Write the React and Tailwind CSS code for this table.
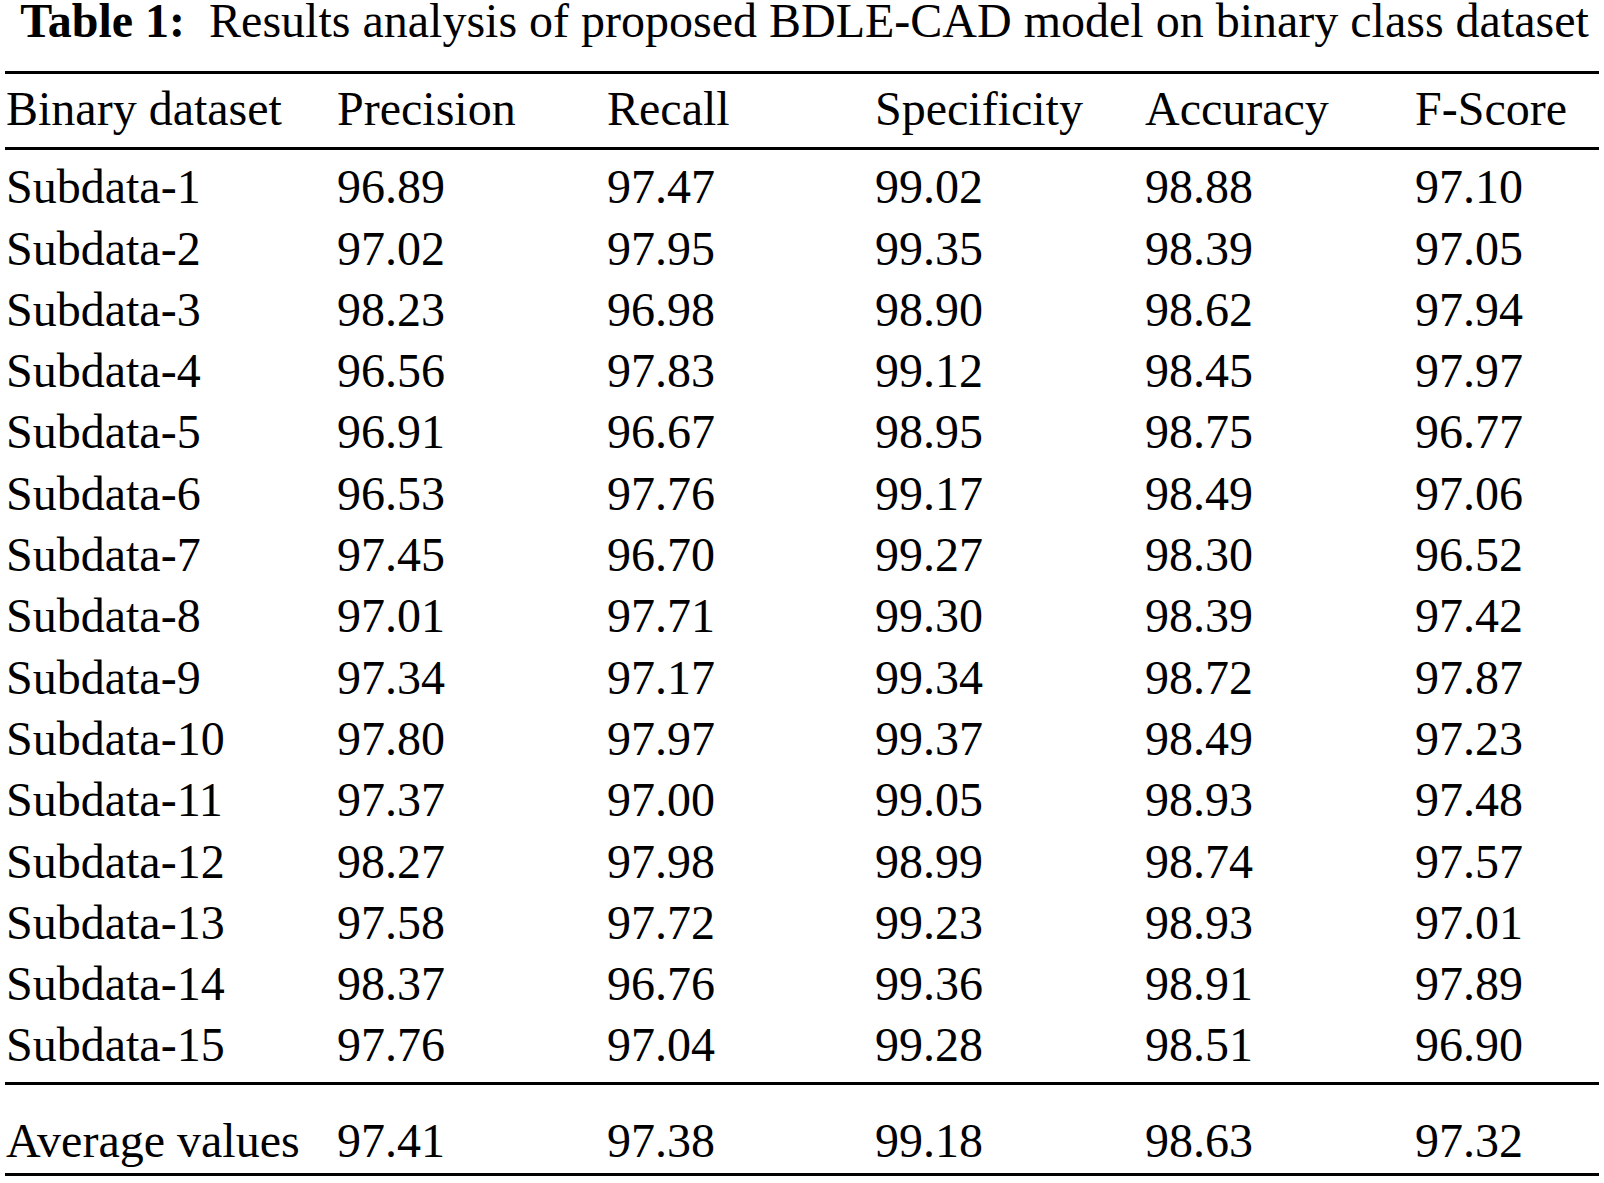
import React from 'react';

const rows = [
  ['Subdata-1', '96.89', '97.47', '99.02', '98.88', '97.10'],
  ['Subdata-2', '97.02', '97.95', '99.35', '98.39', '97.05'],
  ['Subdata-3', '98.23', '96.98', '98.90', '98.62', '97.94'],
  ['Subdata-4', '96.56', '97.83', '99.12', '98.45', '97.97'],
  ['Subdata-5', '96.91', '96.67', '98.95', '98.75', '96.77'],
  ['Subdata-6', '96.53', '97.76', '99.17', '98.49', '97.06'],
  ['Subdata-7', '97.45', '96.70', '99.27', '98.30', '96.52'],
  ['Subdata-8', '97.01', '97.71', '99.30', '98.39', '97.42'],
  ['Subdata-9', '97.34', '97.17', '99.34', '98.72', '97.87'],
  ['Subdata-10', '97.80', '97.97', '99.37', '98.49', '97.23'],
  ['Subdata-11', '97.37', '97.00', '99.05', '98.93', '97.48'],
  ['Subdata-12', '98.27', '97.98', '98.99', '98.74', '97.57'],
  ['Subdata-13', '97.58', '97.72', '99.23', '98.93', '97.01'],
  ['Subdata-14', '98.37', '96.76', '99.36', '98.91', '97.89'],
  ['Subdata-15', '97.76', '97.04', '99.28', '98.51', '96.90'],
];

const header = ['Binary dataset', 'Precision', 'Recall', 'Specificity', 'Accuracy', 'F-Score'];
const average = ['Average values', '97.41', '97.38', '99.18', '98.63', '97.32'];

const Row = ({ cells, className = '' }) => (
  <div className={`grid grid-cols-[332px_270px_268px_270px_270px_1fr] leading-[61.3px] ${className}`}>
    {cells.map((c, i) => (
      <div key={i} className={`whitespace-nowrap ${i === 0 ? 'pl-[1px]' : ''}`}>
        {c}
      </div>
    ))}
  </div>
);

export default function App() {
  return (
    <div className="w-[1604px] h-[1183px] bg-white text-black font-['Liberation_Serif','Times_New_Roman',serif] overflow-hidden">
      <div className="h-[71px] text-center text-[48px] leading-[42px] whitespace-pre pl-[5px]">
        <span className="font-bold">Table 1:</span>
        {'  Results analysis of proposed BDLE-CAD model on binary class dataset'}
      </div>
      <div className="ml-[5px] w-[1594px] text-[48px]">
        <div className="border-t-[3px] border-b-[3px] border-black pt-[4px] pb-[8px]">
          <Row cells={header} />
        </div>
        <div className="pt-[6px] pb-[6px] border-b-[3px] border-black">
          {rows.map((r) => (
            <Row key={r[0]} cells={r} />
          ))}
        </div>
        <div className="pt-[25px] pb-[2px] border-b-[3px] border-black">
          <Row cells={average} />
        </div>
      </div>
    </div>
  );
}
